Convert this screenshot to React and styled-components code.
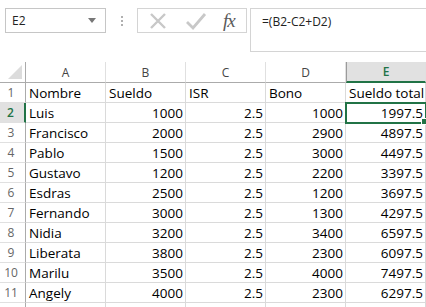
import React from 'react';
import styled, { createGlobalStyle } from "styled-components";

const rows = [
  ['Luis', 1000, 2.5, 1000, 1997.5],
  ['Francisco', 2000, 2.5, 2900, 4897.5],
  ['Pablo', 1500, 2.5, 3000, 4497.5],
  ['Gustavo', 1200, 2.5, 2200, 3397.5],
  ['Esdras', 2500, 2.5, 1200, 3697.5],
  ['Fernando', 3000, 2.5, 1300, 4297.5],
  ['Nidia', 3200, 2.5, 3400, 6597.5],
  ['Liberata', 3800, 2.5, 2300, 6097.5],
  ['Marilu', 3500, 2.5, 4000, 7497.5],
  ['Angely', 4000, 2.5, 2300, 6297.5],
];

const GlobalStyle = createGlobalStyle`
  body {
    margin: 0;
    background: #fff;
    font-family: "Open Sans", "Liberation Sans", sans-serif;
    overflow: hidden;
  }
`;

const App = () => {
  return (
    <Page>
      <GlobalStyle />
      <FormulaBar>
        <NameBox>
          <span>E2</span>
          <svg width="8" height="5" viewBox="0 0 8 5"><path d="M0 0h8L4 5z" fill="#777" /></svg>
        </NameBox>
        <Dots>
          <i /><i /><i />
        </Dots>
        <Buttons>
          <svg width="22" height="22" viewBox="0 0 22 22">
            <path d="M4 4L18 18M18 4L4 18" stroke="#c8c8c8" strokeWidth="2.4" />
          </svg>
          <svg width="24" height="22" viewBox="0 0 24 22">
            <path d="M3 12l6 6L21 4" stroke="#c8c8c8" strokeWidth="2.8" fill="none" />
          </svg>
          <Fx>fx</Fx>
        </Buttons>
        <FormulaBox>=(B2-C2+D2)</FormulaBox>
      </FormulaBar>

      <Sheet>
        <Corner>
          <svg width="14" height="14" viewBox="0 0 14 14"><path d="M14 0V14H0z" fill="#dcdcdc" /></svg>
        </Corner>
        {['A', 'B', 'C', 'D', 'E'].map((c) => (
          <ColHead key={c} $active={c === 'E'}>{c}</ColHead>
        ))}

        <RowHead>1</RowHead>
        <Cell>Nombre</Cell>
        <Cell>Sueldo</Cell>
        <Cell>ISR</Cell>
        <Cell>Bono</Cell>
        <Cell>Sueldo total</Cell>

        {rows.map((r, i) => (
          <React.Fragment key={i}>
            <RowHead $active={i === 0}>{i + 2}</RowHead>
            <Cell>{r[0]}</Cell>
            <Cell $num>{r[1]}</Cell>
            <Cell $num>{r[2]}</Cell>
            <Cell $num>{r[3]}</Cell>
            <Cell $num $selected={i === 0}>
              {r[4]}
              {i === 0 && <Handle />}
            </Cell>
          </React.Fragment>
        ))}

        {/* row 12 only peeks in at the bottom edge */}
        <RowHead />
        <Cell /><Cell /><Cell /><Cell /><Cell />
      </Sheet>
    </Page>
  );
}

const Page = styled.div`
  width: 426px;
  height: 307px;
  overflow: hidden;
  background: #fff;
`;

const FormulaBar = styled.div`
  display: flex;
  align-items: flex-start;
  height: 62px;
  padding: 8px 0 0 5px;
  box-sizing: border-box;
`;

const NameBox = styled.div`
  width: 101px;
  height: 25px;
  box-sizing: border-box;
  border: 1px solid #c6c6c6;
  display: flex;
  align-items: center;
  justify-content: space-between;
  padding: 0 9px 0 6px;
  font-size: 12px;
  color: #222;
`;

const Dots = styled.div`
  width: 31px;
  height: 25px;
  display: flex;
  flex-direction: column;
  align-items: center;
  justify-content: center;
  gap: 2px;
  i {
    width: 2px;
    height: 2px;
    background: #b0b0b0;
  }
`;

const Buttons = styled.div`
  width: 110px;
  height: 25px;
  box-sizing: border-box;
  border: 1px solid #d4d4d4;
  display: flex;
  align-items: center;
  justify-content: space-around;
  padding: 0 4px 0 2px;
`;

const Fx = styled.span`
  font-family: "Liberation Serif", serif;
  font-style: italic;
  font-size: 19px;
  color: #5a5a5a;
  letter-spacing: -1px;
`;

const FormulaBox = styled.div`
  flex: 1;
  margin-left: 3px;
  height: 44px;
  box-sizing: border-box;
  border: 1px solid #d4d4d4;
  border-right: none;
  padding: 4px 0 0 11px;
  font-size: 12px;
  color: #222;
`;

const Sheet = styled.div`
  display: grid;
  grid-template-columns: 26px 80px 80px 80px 80px 80px;
  grid-template-rows: 21px;
  grid-auto-rows: 20px;
  font-size: 13.5px;
  color: #000;
`;

const Corner = styled.div`
  display: flex;
  align-items: flex-end;
  justify-content: flex-end;
  padding: 0 3px 3px 0;
  border-bottom: 1px solid #ababab;
  border-right: 1px solid #ababab;
`;

const ColHead = styled.div`
  display: flex;
  align-items: center;
  justify-content: center;
  font-size: 12px;
  color: ${(p) => (p.$active ? '#217346' : '#444')};
  background: ${(p) => (p.$active ? '#e1e1e1' : '#fff')};
  border-right: 1px solid #e0e0e0;
  border-left: ${(p) => (p.$active ? '1px solid #9b9b9b' : 'none')};
  border-bottom: ${(p) => (p.$active ? '2px solid #217346' : '1px solid #ababab')};
  box-sizing: border-box;
  font-weight: ${(p) => (p.$active ? 600 : 400)};
`;

const RowHead = styled.div`
  display: flex;
  align-items: center;
  justify-content: center;
  padding-right: 3px;
  font-size: 12px;
  color: ${(p) => (p.$active ? '#217346' : '#666')};
  background: ${(p) => (p.$active ? '#e1e1e1' : '#fff')};
  border-right: ${(p) => (p.$active ? '2px solid #217346' : '1px solid #ababab')};
  border-bottom: 1px solid #e0e0e0;
  box-sizing: border-box;
  font-weight: ${(p) => (p.$active ? 600 : 400)};
`;

const Cell = styled.div`
  display: flex;
  align-items: center;
  justify-content: ${(p) => (p.$num ? 'flex-end' : 'flex-start')};
  padding: 0 2px 0 3px;
  box-sizing: border-box;
  white-space: nowrap;
  border-right: 1px solid #dadada;
  border-bottom: 1px solid #dadada;
  ${(p) => p.$selected && `
    outline: 2px solid #217346;
    outline-offset: -1px;
    position: relative;
    z-index: 1;
  `}
`;

const Handle = styled.span`
  position: absolute;
  right: -3px;
  bottom: -3px;
  width: 5px;
  height: 5px;
  background: #217346;
  border: 1px solid #fff;
`;

export default App;
